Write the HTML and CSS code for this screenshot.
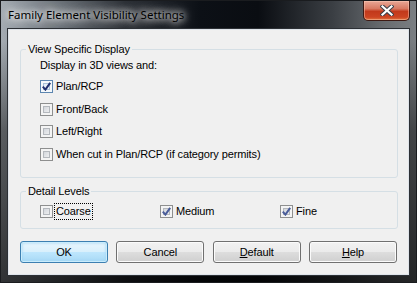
FILE: index.html
```html
<!DOCTYPE html>
<html lang="en">
<head>
    <meta charset="UTF-8">
    <title>Family Element Visibility Settings</title>
    <link rel="stylesheet" href="styles.css">
</head>
<body>
    <div class="window">
        <div class="titlebar">
            <span class="title">Family Element Visibility Settings</span>
            <button class="close" type="button">
                <svg width="14" height="11" viewBox="0 0 14 11">
                    <path d="M2.5 1.5 L11.5 9.5 M11.5 1.5 L2.5 9.5" stroke="#3a3f48" stroke-width="4.2" stroke-linecap="square" fill="none"/>
                    <path d="M2.5 1.5 L11.5 9.5 M11.5 1.5 L2.5 9.5" stroke="#fff" stroke-width="2.2" stroke-linecap="square" fill="none"/>
                </svg>
            </button>
        </div>
        <div class="client">
            <fieldset class="group">
                <legend>View Specific Display</legend>
                <div class="group-body view-body">
                    <div class="caption">Display in 3D views and:</div>
                    <ul class="checklist">
                        <li class="check">
                            <span class="box hot"><svg width="9" height="9" viewBox="0 0 9 9"><path d="M0.8 4.6 L3.4 7.6 L8.2 0.9" stroke="#1f2f6e" stroke-width="2" fill="none"/></svg></span>
                            <span>Plan/RCP</span>
                        </li>
                        <li class="check"><span class="box"></span><span>Front/Back</span></li>
                        <li class="check"><span class="box"></span><span>Left/Right</span></li>
                        <li class="check"><span class="box"></span><span>When cut in Plan/RCP (if category permits)</span></li>
                    </ul>
                </div>
            </fieldset>
            <fieldset class="group detail">
                <legend>Detail Levels</legend>
                <div class="group-body levels">
                    <div class="check"><span class="box"></span><span class="focus">Coarse</span></div>
                    <div class="check">
                        <span class="box"><svg width="9" height="9" viewBox="0 0 9 9"><path d="M0.8 4.6 L3.4 7.6 L8.2 0.9" stroke="#4a5d9a" stroke-width="2" fill="none"/></svg></span>
                        <span>Medium</span>
                    </div>
                    <div class="check">
                        <span class="box"><svg width="9" height="9" viewBox="0 0 9 9"><path d="M0.8 4.6 L3.4 7.6 L8.2 0.9" stroke="#4a5d9a" stroke-width="2" fill="none"/></svg></span>
                        <span>Fine</span>
                    </div>
                </div>
            </fieldset>
            <div class="buttons">
                <button class="btn btn-default" type="button">OK</button>
                <button class="btn" type="button">Cancel</button>
                <button class="btn" type="button"><u>D</u>efault</button>
                <button class="btn" type="button"><u>H</u>elp</button>
            </div>
        </div>
    </div>
</body>
</html>
```

FILE: styles.css
```css
*{
    margin: 0;
    padding: 0;
    box-sizing: border-box;
}
ul,li{
    list-style: none;
}
body{
    width: 417px;
    height: 283px;
    overflow: hidden;
    font-family: "Liberation Sans", Arial, sans-serif;
    font-size: 11px;
    letter-spacing: -0.12px;
    color: #000;
}
.window{
    width: 417px;
    height: 283px;
    display: flex;
    flex-direction: column;
    border: 1px solid #1a1c1f;
    background:
        linear-gradient(180deg, rgba(0,0,0,0) 0, rgba(0,0,0,0) 40px, rgba(0,0,0,.45) 130px, rgba(0,0,0,.7) 100%),
        linear-gradient(90deg, #a4abb2 0, #737a81 12%, #2c3036 30%, #0c1016 48%, #0a0d12 62%, #3b3f44 80%, #676b6f 92%, #7b7f83 100%);
}

/* title bar */
.titlebar{
    height: 28px;
    display: flex;
    align-items: flex-start;
}
.title{
    margin-top: 6px;
    padding-left: 7px;
    font-family: "Noto Sans", "Open Sans", sans-serif;
    font-size: 11.5px;
    letter-spacing: 0;
    line-height: 16px;
    color: #000;
    text-shadow: 0 0 6px #fff, 0 0 10px #fff, 0 0 14px rgba(255,255,255,.9);
}
.close{
    margin-left: auto;
    margin-right: 6px;
    width: 47px;
    height: 20px;
    border: 1px solid #3d1a14;
    border-top: 0;
    border-radius: 0 0 5px 5px;
    background: linear-gradient(180deg, #e9a796 0, #d87a63 40%, #c2391b 55%, #cc4422 85%, #e0763f 100%);
    box-shadow: inset 0 0 0 1px rgba(255,210,190,.45);
    display: flex;
    align-items: center;
    justify-content: center;
}

/* client area */
.client{
    flex: 1;
    margin: 0 7px 7px 7px;
    background-color: #f0f0f0;
    border: 1px solid #dfe4ea;
    box-shadow: 0 0 0 1px #2c3035;
    padding: 13px 10px 0 11px;
    display: flex;
    flex-direction: column;
}
.group{
    border: 1px solid #d5dfe5;
    border-radius: 3px;
    padding: 0;
}
.group legend{
    margin-left: 5px;
    padding: 0 2px;
    line-height: 13px;
}
.group-body{
    padding: 3px 10px 11px 19px;
}
.caption{
    line-height: 13px;
}
.checklist{
    margin-top: 3.5px;
}
.check{
    height: 22.5px;
    display: flex;
    align-items: center;
    gap: 3px;
    line-height: 13px;
}
.box{
    width: 13px;
    height: 13px;
    flex: none;
    border: 1px solid #8e8f8f;
    padding: 1px;
    background:
        linear-gradient(135deg, #c9cdd3 0, #e3e5e8 55%, #f6f6f6 100%) content-box,
        #f4f4f4;
    box-shadow: inset 0 0 0 2px #f4f4f4, inset 0 0 0 3px #b4b8bd;
    display: flex;
    align-items: center;
    justify-content: center;
}
.box.hot{
    border-color: #5d86b0;
    background:
        linear-gradient(135deg, #dbe8f3 0, #eef4fa 60%, #fbfdff 100%) content-box,
        #fff;
    box-shadow: inset 0 0 0 2px #f4f8fb, inset 0 0 0 3px #a9c1d8;
}
.box svg{
    position: relative;
    z-index: 1;
}

.detail{
    margin-top: 7px;
}
.levels{
    display: grid;
    grid-template-columns: 120px 120px 1fr;
    padding-bottom: 5px;
    padding-top: 3px;
}
.levels .check{
    height: 22px;
}
.focus{
    outline: 1px dotted #000;
    outline-offset: 1px;
}

/* buttons */
.buttons{
    margin-top: 12px;
    margin-right: 1px;
    display: flex;
    justify-content: space-between;
}
.btn{
    width: 88px;
    height: 22px;
    border: 1px solid #707070;
    border-radius: 3px;
    background: linear-gradient(180deg, #f2f2f2 0, #ebebeb 48%, #dddddd 52%, #cfcfcf 100%);
    box-shadow: inset 0 0 0 1px #fbfbfb;
    font-family: "Liberation Sans", Arial, sans-serif;
    font-size: 11px;
    letter-spacing: -0.12px;
    color: #000;
}
.btn-default{
    border-color: #3c7fb1;
    background: linear-gradient(180deg, #eaf6fd 0, #d9f0fc 48%, #bee6fd 52%, #a7d9f5 100%);
    box-shadow: inset 0 0 0 1px #c9ecfc, inset 0 0 3px 1px #9fd5f2;
}
```
